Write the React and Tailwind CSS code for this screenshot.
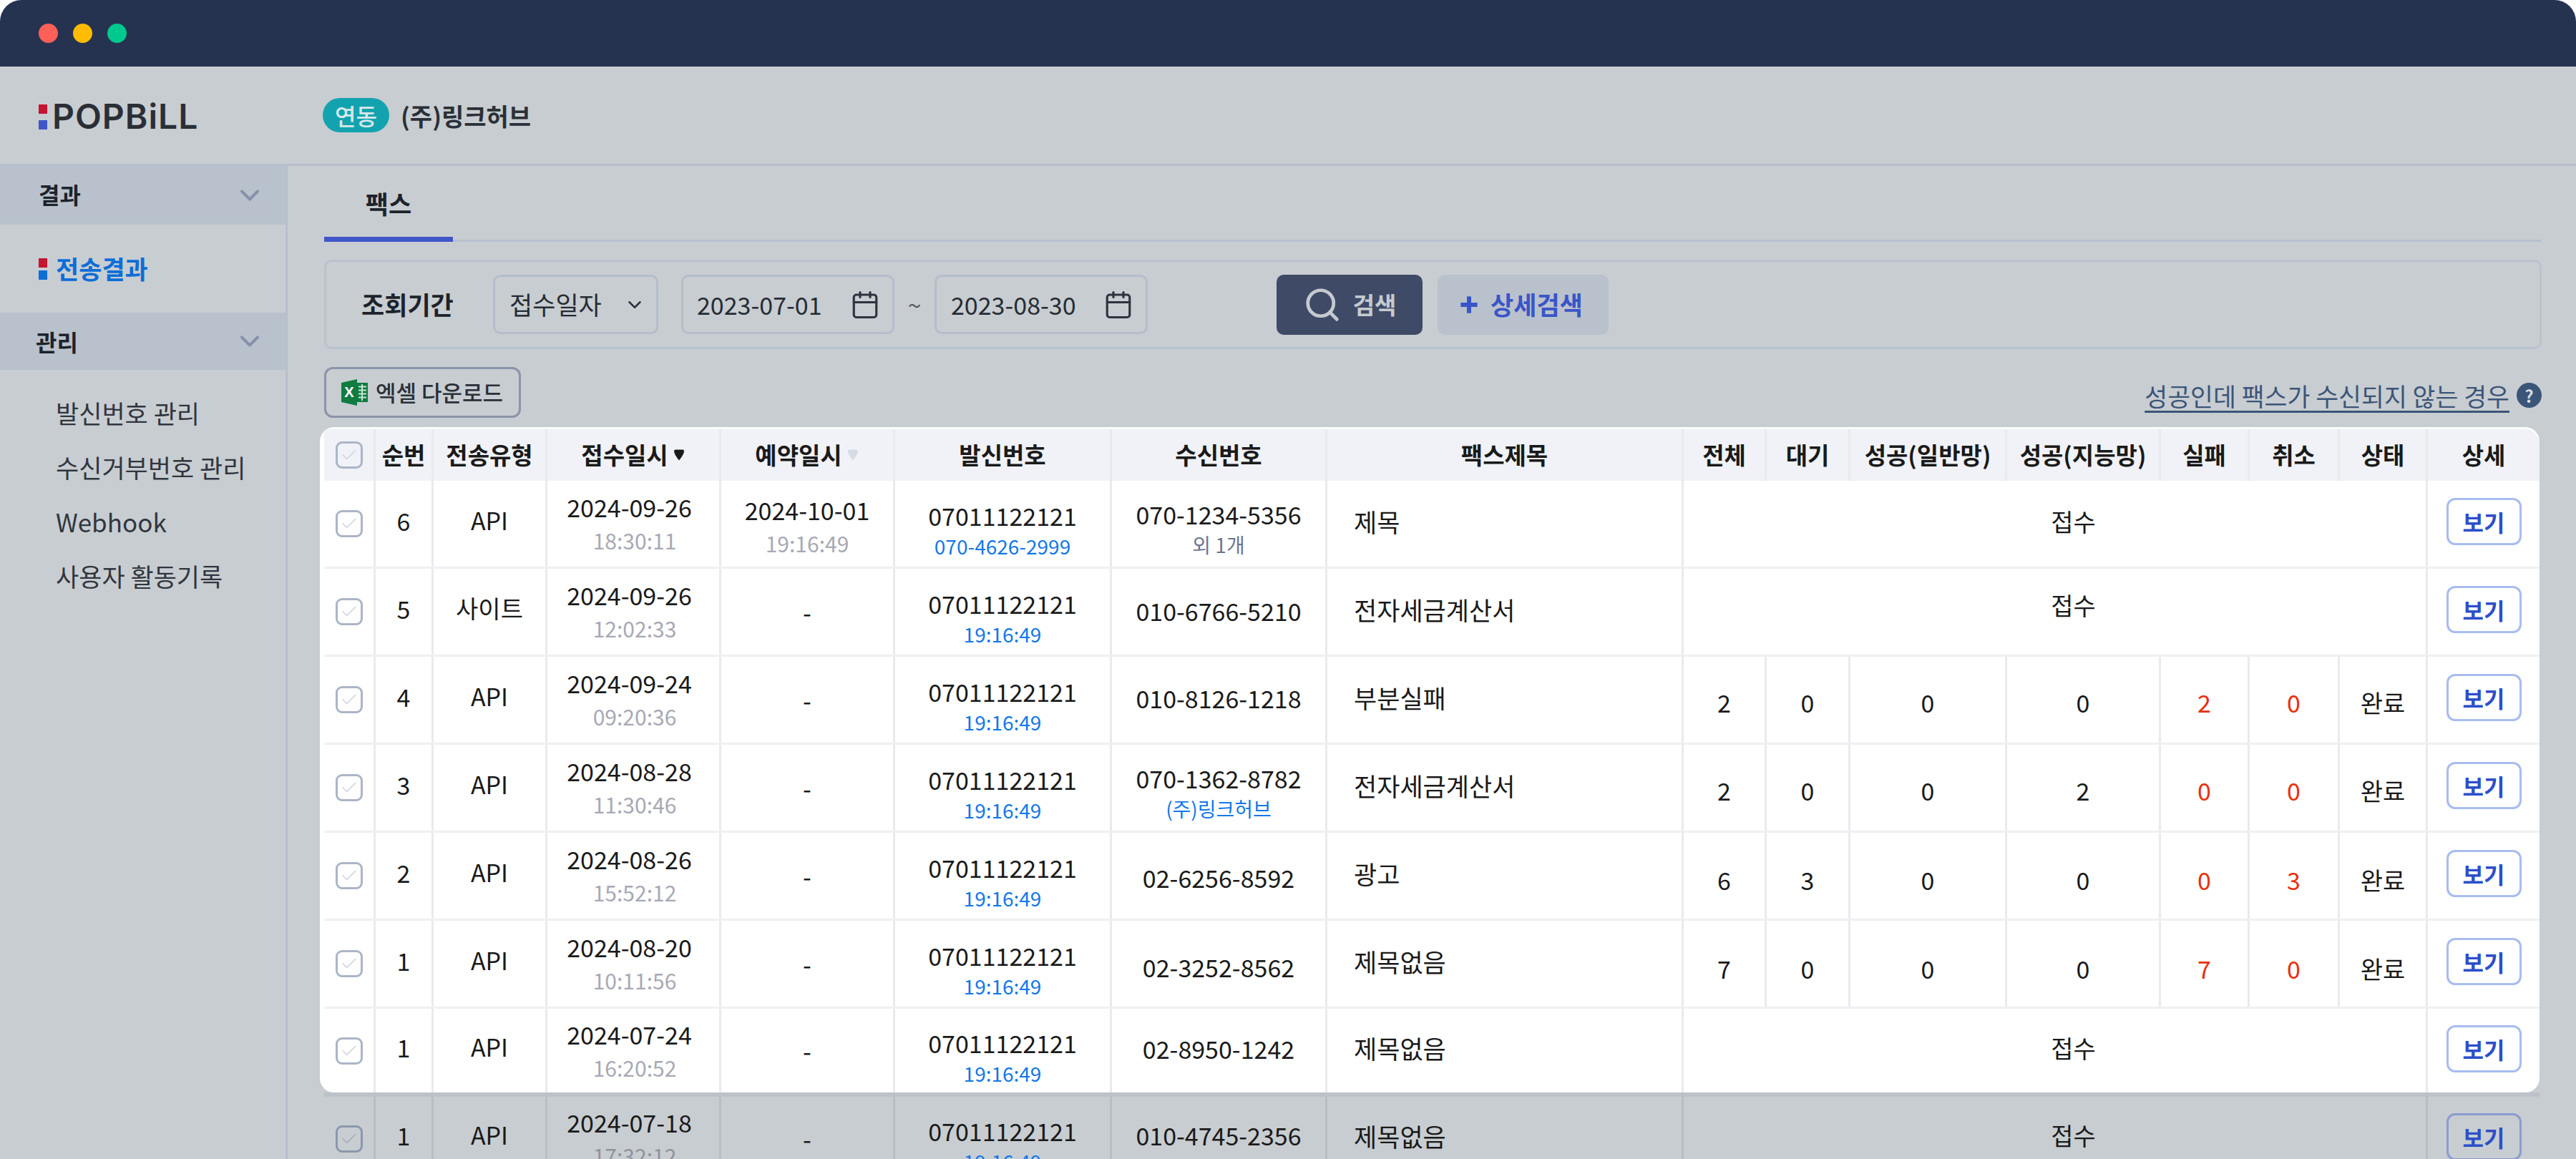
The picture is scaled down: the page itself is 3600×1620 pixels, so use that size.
import { Calendar, Check, ChevronDown, Plus, Search } from "lucide-react";

const gridCols = "grid grid-cols-[72px_81px_159px_243px_243px_303px_301px_498px_116px_117px_219px_215px_124px_126px_123px_156px]";

const columns = ["순번", "전송유형", "접수일시", "예약일시", "발신번호", "수신번호", "팩스제목", "전체", "대기", "성공(일반망)", "성공(지능망)", "실패", "취소", "상태", "상세"];

const rows = [
  { no: 6, type: "API", date: "2024-09-26", time: "18:30:11", resDate: "2024-10-01", resTime: "19:16:49", senderSub: "070-4626-2999", recv: "070-1234-5356", recvSub: "외 1개", recvPad: "pt-[16px]", title: "제목", pending: "pb-[8px]" },
  { no: 5, type: "사이트", date: "2024-09-26", time: "12:02:33", recv: "010-6766-5210", recvPad: "pb-[4px]", title: "전자세금계산서", pending: "pb-[20px]" },
  { no: 4, type: "API", date: "2024-09-24", time: "09:20:36", recv: "010-8126-1218", recvPad: "pb-[6px]", title: "부분실패", counts: [2, 0, 0, 0, 2, 0], countPad: "pt-[6px]" },
  { no: 3, type: "API", date: "2024-08-28", time: "11:30:46", recv: "070-1362-8782", recvSub: "(주)링크허브", recvSubBlue: true, recvPad: "pt-[16px]", title: "전자세금계산서", counts: [2, 0, 0, 2, 0, 0], countPad: "pt-[6px]" },
  { no: 2, type: "API", date: "2024-08-26", time: "15:52:12", recv: "02-6256-8592", recvPad: "pt-[4px]", title: "광고", counts: [6, 3, 0, 0, 0, 3], countPad: "pt-[10px]" },
  { no: 1, type: "API", date: "2024-08-20", time: "10:11:56", recv: "02-3252-8562", recvPad: "pt-[8px]", title: "제목없음", counts: [7, 0, 0, 0, 7, 0], countPad: "pt-[12px]" },
  { no: 1, type: "API", date: "2024-07-24", time: "16:20:52", recv: "02-8950-1242", recvPad: "pb-[6px]", title: "제목없음", pending: "pb-[8px]" },
];

const dimRow = { no: 1, type: "API", date: "2024-07-18", time: "17:32:12", recv: "010-4745-2356", recvPad: "pb-[10px]", title: "제목없음", pending: "pb-[10px]" };

function Mark({ blue = "bg-[#3f56c9]", className = "" }) {
  return (
    <span className={`flex w-[12px] flex-col justify-between ${className}`}>
      <span className="h-[13px] bg-[#c4142f]" />
      <span className={`h-[13px] ${blue}`} />
    </span>
  );
}

function CheckBox({ dim }) {
  return (
    <span className={`flex h-[38px] w-[38px] items-center justify-center rounded-[9px] border-[3px] ${dim ? "border-[#8a97ad]" : "border-[#abb5c7]"}`}>
      <Check size={26} strokeWidth={1.6} className={dim ? "text-[#a9afb8]" : "text-[#d3d6dc]"} />
    </span>
  );
}

function SortCaret({ className }) {
  return (
    <svg width="18" height="18" viewBox="0 0 18 18" className={className}>
      <path d="M2 3.5 Q2 1.5 4 1.5 H14 Q16 1.5 16 3.5 Q16 8 9 16.5 Q2 8 2 3.5Z" fill="currentColor" />
    </svg>
  );
}

function ExcelIcon() {
  return (
    <svg width="37" height="37" viewBox="0 0 37 37">
      <path d="M0 5 L22 0 V37 L0 32Z" fill="#107c41" />
      <rect x="22" y="5" width="15" height="27" fill="#107c41" />
      <path d="M24 10.5H35M24 15.5H35M24 20.5H35M24 25.5H35M29 7V30" stroke="#c9e4d4" strokeWidth="2" fill="none" />
      <text x="11" y="25" textAnchor="middle" fontSize="20" fontWeight="700" fill="#fff" fontFamily="Liberation Sans, sans-serif">X</text>
    </svg>
  );
}

function Sidebar() {
  const links = ["발신번호 관리", "수신거부번호 관리", "Webhook", "사용자 활동기록"];
  return (
    <aside className="w-[402px] shrink-0 border-r-[3px] border-[#b6bfcc]">
      <div className="flex h-[82px] items-center justify-between bg-[#b9c2cc] pl-[54px] pr-[28px]">
        <span className="pb-[4px] text-[32px] font-bold text-[#1d232c]">결과</span>
        <ChevronDown size={44} strokeWidth={2.2} className="text-[#8792aa]" />
      </div>
      <div className="flex h-[123px] items-center pl-[54px]">
        <Mark blue="bg-[#0d6ed8]" className="h-[30px]" />
        <span className="ml-[12px] text-[35px] font-bold text-[#0d6ed8]">전송결과</span>
      </div>
      <div className="flex h-[80px] items-center justify-between bg-[#b9c2cc] pl-[50px] pr-[28px]">
        <span className="text-[32px] font-bold text-[#1d232c]">관리</span>
        <ChevronDown size={44} strokeWidth={2.2} className="text-[#8792aa]" />
      </div>
      <ul className="flex flex-col pl-[78px] pt-[22px] text-[35px] text-[#30363f]">
        {links.map((l) => (
          <li key={l} className="flex h-[76px] items-center">{l}</li>
        ))}
      </ul>
    </aside>
  );
}

function FilterBar() {
  return (
    <div className="ml-[6px] mt-[25px] flex h-[125px] items-center rounded-[10px] border-[3px] border-[#b9c2cf] pl-[49px] text-[34px] text-[#262c35]">
      <span className="w-[184px] text-[35px] font-bold text-[#1d232c]">조회기간</span>
      <div className="flex h-[83px] w-[231px] items-center justify-between rounded-[10px] border-[3px] border-[#b4bdcc] pl-[20px] pr-[15px]">
        <span className="text-[35px]">접수일자</span>
        <ChevronDown size={30} strokeWidth={2} className="text-[#2c3440]" />
      </div>
      <div className="ml-[32px] flex h-[83px] w-[298px] items-center justify-between rounded-[10px] border-[3px] border-[#b4bdcc] pl-[19px] pr-[17px]">
        <span>2023-07-01</span>
        <Calendar size={42} strokeWidth={1.8} className="text-[#2c3440]" />
      </div>
      <span className="w-[56px] text-center text-[#555c66]">~</span>
      <div className="flex h-[83px] w-[298px] items-center justify-between rounded-[10px] border-[3px] border-[#b4bdcc] pl-[20px] pr-[17px]">
        <span>2023-08-30</span>
        <Calendar size={42} strokeWidth={1.8} className="text-[#2c3440]" />
      </div>
      <button className="ml-[180px] flex h-[84px] w-[204px] items-center justify-center gap-[16px] rounded-[10px] bg-[#3f4a66] font-bold text-[#c5cad0]">
        <Search size={54} strokeWidth={2.1} />
        <span className="text-[33px]">검색</span>
      </button>
      <button className="ml-[21px] flex h-[84px] w-[239px] items-center justify-center gap-[10px] rounded-[10px] bg-[#b9c2cc] pr-[12px] font-bold text-[#3a55c8]">
        <Plus size={40} strokeWidth={3.6} strokeLinecap="butt" />
        <span className="text-[35px]">상세검색</span>
      </button>
    </div>
  );
}

function Toolbar() {
  return (
    <div className="ml-[6px] mt-[25px] flex h-[71px] items-center justify-between">
      <button className="flex h-[71px] w-[275px] items-center gap-[11px] rounded-[12px] border-[3px] border-[#8a94aa] pl-[21px] text-[31px] font-medium text-[#2a3038]">
        <ExcelIcon />
        <span>엑셀 다운로드</span>
      </button>
      <div className="flex items-center gap-[10px] pt-[8px]">
        <a className="text-[34.7px] leading-[42px] text-[#3b5578] underline decoration-[3px] underline-offset-[6px]">성공인데 팩스가 수신되지 않는 경우</a>
        <span className="flex h-[35px] w-[35px] items-center justify-center rounded-full bg-[#3b5578] text-[24px] font-bold leading-none text-[#d8dce2]">?</span>
      </div>
    </div>
  );
}

function HeaderRow() {
  return (
    <div className={`${gridCols} h-[72px] rounded-tr-[20px] bg-[#f0f2f7] text-[33px] font-bold text-[#1a1a1a]`}>
      <div className="flex items-center justify-center border-r-[3px] border-[#e8eaee]">
        <CheckBox />
      </div>
      {columns.map((c, i) => (
        <div key={c} className={`flex items-center justify-center gap-[6px] whitespace-nowrap ${i === columns.length - 1 ? "" : "border-r-[3px] border-[#e8eaee]"}`}>
          <span>{c}</span>
          {c === "접수일시" && <SortCaret className="text-[#1a1a1a]" />}
          {c === "예약일시" && <SortCaret className="text-[#d6dbe6]" />}
        </div>
      ))}
    </div>
  );
}

function Row({ row, dim, last }) {
  const line = dim ? "border-[#b7bec5]" : "border-[#e8eaee]";
  const cell = `flex flex-col items-center justify-center border-r-[3px] ${line}`;
  const rowClass = dim
    ? "h-[123px] border-t-[6px] border-[#bcc2c8]"
    : last
      ? "h-[117px]"
      : "h-[123px] border-b-[3px] border-[#eff0f3]";

  return (
    <div className={`${gridCols} ${rowClass} text-[34px] text-[#1a1a1a]`}>
      <div className={cell}><CheckBox dim={dim} /></div>
      <div className={`${cell} pb-[10px]`}>{row.no}</div>
      <div className={`${cell} pb-[12px]`}>{row.type}</div>
      <div className={cell}>
        <span className="pr-[11px] leading-[47px]">{row.date}</span>
        <span className={`pl-[4px] text-[30px] leading-[47px] ${dim ? "text-[#8f939e]" : "text-[#a7a9b5]"}`}>{row.time}</span>
      </div>
      {row.resDate ? (
        <div className={`${cell} pt-[8px]`}>
          <span className="leading-[46px]">{row.resDate}</span>
          <span className="text-[30px] leading-[46px] text-[#a7a9b5]">{row.resTime}</span>
        </div>
      ) : (
        <div className={cell}>-</div>
      )}
      <div className={`${cell} pt-[20px]`}>
        <span className="leading-[43px]">07011122121</span>
        <span className="text-[28px] leading-[43px] text-[#1378e6]">{row.senderSub || "19:16:49"}</span>
      </div>
      <div className={`${cell} ${row.recvPad}`}>
        <span className="leading-[43px]">{row.recv}</span>
        {row.recvSub && (
          <span className={`text-[28px] leading-[43px] ${row.recvSubBlue ? "text-[#1378e6]" : "text-[#6b7591]"}`}>{row.recvSub}</span>
        )}
      </div>
      <div className={`flex items-center justify-start border-r-[3px] pb-[6px] pl-[37px] text-[35px] ${line}`}>{row.title}</div>
      {row.counts ? (
        <>
          {row.counts.map((n, i) => (
            <div key={i} className={`${cell} ${row.countPad} ${i > 3 ? "text-[#e8300e]" : ""}`}>{n}</div>
          ))}
          <div className={`${cell} ${row.countPad}`}>완료</div>
        </>
      ) : (
        <div className={`col-span-7 flex items-center justify-center border-r-[3px] pl-[52px] ${line} ${row.pending}`}>접수</div>
      )}
      <div className="flex items-center justify-center pb-[6px]">
        <button className={`flex h-[66px] w-[105px] items-center justify-center rounded-[12px] border-[3px] text-[32px] font-semibold text-[#2d4fc9] ${dim ? "border-[#8b9cd0]" : "border-[#a8bcf0]"}`}>보기</button>
      </div>
    </div>
  );
}

export default function App() {
  return (
    <div className="h-[1620px] w-[3600px] overflow-hidden bg-white [font-family:'Noto_Sans_CJK_KR','Noto_Sans',sans-serif]">
      <div className="flex h-[93px] items-center gap-[21px] rounded-t-[30px] bg-[#263350] pl-[54px]">
        <span className="h-[27px] w-[27px] rounded-full bg-[#ff6058]" />
        <span className="h-[27px] w-[27px] rounded-full bg-[#ffbc00]" />
        <span className="h-[27px] w-[27px] rounded-full bg-[#00c98d]" />
      </div>
      <div className="h-[1527px] bg-[#c8cdd1]">
        <header className="flex h-[139px] items-center border-b-[3px] border-[#b6bfcc] pl-[54px]">
          <Mark className="mt-[4px] h-[35px]" />
          <span className="ml-[7px] mt-[4px] w-[378px] text-[48px] font-semibold leading-none tracking-[1px] text-[#2a2f36] [font-family:Inter,sans-serif]">POPBiLL</span>
          <span className="flex h-[48px] w-[93px] items-center justify-center rounded-[24px] bg-[#13a3af] text-[32px] font-medium text-[#d7e8ea]">연동</span>
          <span className="ml-[16px] text-[34px] font-semibold text-[#2a3038]">(주)링크허브</span>
        </header>
        <div className="flex">
          <Sidebar />
          <main className="flex-1 pl-[45px] pr-[48px]">
            <div className="ml-[6px] h-[106px] border-b-[3px] border-[#b6bfcc]">
              <div className="flex h-[106px] w-[180px] items-center justify-center border-b-[7px] border-[#3f56c9] pt-[6px] text-[35px] font-bold text-[#1d232c]">팩스</div>
            </div>
            <FilterBar />
            <Toolbar />
            <div className="mt-[13px] w-[3102px] overflow-hidden rounded-[20px] bg-white pl-[6px] pt-[3px]">
              <HeaderRow />
              {rows.map((r, i) => (
                <Row key={r.date + r.time} row={r} last={i === rows.length - 1} />
              ))}
            </div>
            <div className="w-[3102px] pl-[6px]">
              <Row row={dimRow} dim />
            </div>
          </main>
        </div>
      </div>
    </div>
  );
}
